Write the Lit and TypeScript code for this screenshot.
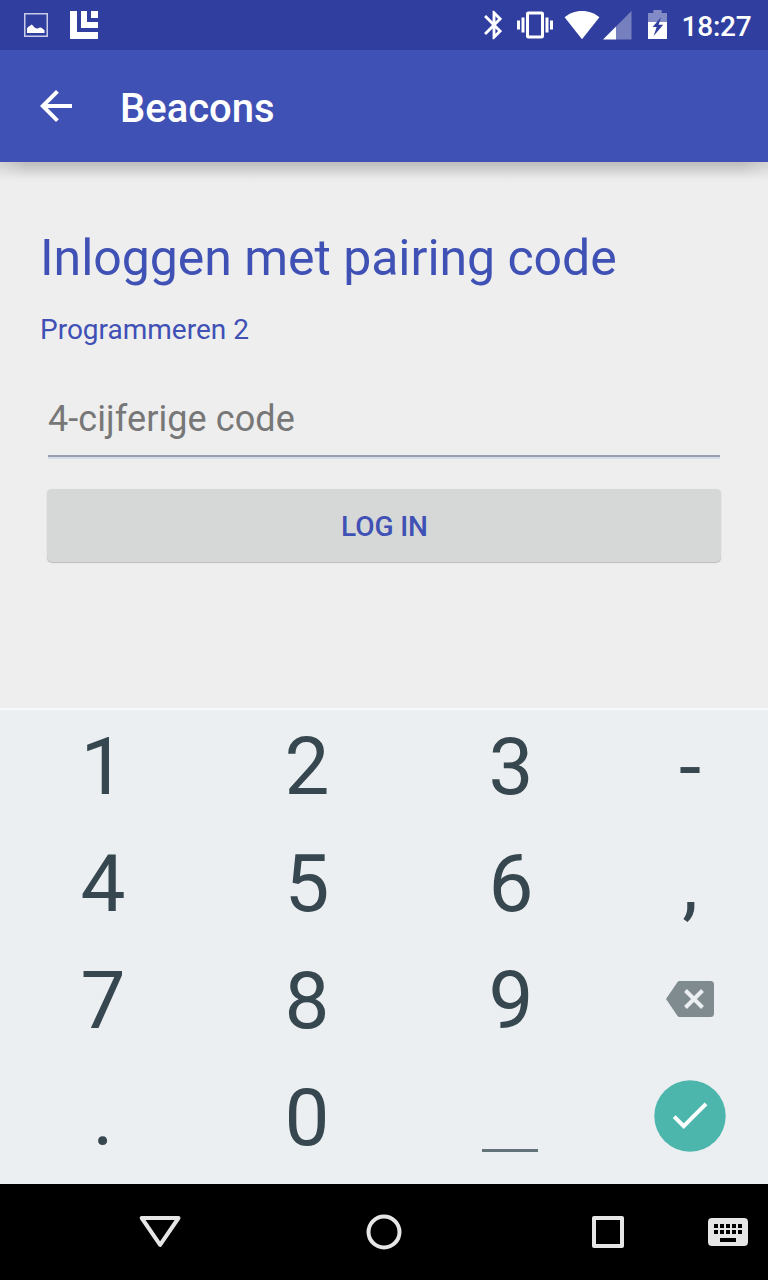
import { LitElement, html, css, svg } from "lit";
import { customElement } from "lit/decorators.js";

@customElement("status-bar")
class StatusBar extends LitElement {
  static styles = css`
    :host { display: flex; height: 50px; box-sizing: border-box; background: #303f9f; color: #fff;
      justify-content: space-between; padding: 0 16px 0 24px; }
    .group { display: flex; align-items: flex-start; }
    svg { display: block; height: 50px; flex: none; }
    .photo { width: 24px; margin-right: 22px; }
    .logo { width: 28px; }
    .bt { width: 18px; margin-right: 15px; }
    .vib { width: 36px; margin-right: 11px; }
    .wifi { width: 36px; margin-right: 3px; }
    .signal { width: 29px; margin-right: 16px; }
    .battery { width: 19px; margin-right: 14.5px; }
    .clock { font-size: 28px; font-weight: 500; line-height: 53px; width: 70.5px; white-space: nowrap; letter-spacing: -.2px; }
  `;
  render() {
    return html`
      <div class="group">
        <svg class="photo" viewBox="0 0 24 50">
          <rect x=".75" y="13.75" width="22.5" height="22.5" fill="none" stroke="#c8cce6" stroke-width="1.5"/>
          <path fill="#fff" d="M3 33V28.5C4.5 26 6 26.500 7.500 24.500C9.500 25.500 10.500 28.500 13 28.500C14.500 28.500 15 27 16.500 27.500C18.500 28 19 29.500 20.500 30V33Z"/>
        </svg>
        <svg class="logo" viewBox="0 0 28 50" fill="#fff">
          <path d="M0 11H7V32H28V39H0ZM11 11H17V22H28V28H11ZM21 11H28V18H21Z"/>
        </svg>
      </div>
      <div class="group">
        <svg class="bt" viewBox="0 0 18 50" fill="#fff">
          <path transform="translate(-7 8) scale(1.417)" d="M17.71 7.71L12 2h-1v7.59L6.41 5 5 6.41 10.59 12 5 17.59 6.41 19 11 14.41V22h1l5.71-5.71-4.3-4.29 4.3-4.29zM13 5.83l1.88 1.88L13 9.59V5.83zm1.88 10.46L13 18.17v-3.76l1.88 1.88z"/>
        </svg>
        <svg class="vib" viewBox="0 0 36 50" fill="#fff">
          <path transform="translate(0 7) scale(1.5)" d="M0 15h2V9H0v6zm3 2h2V7H3v10zm19-8v6h2V9h-2zm-3 8h2V7h-2v10zM16.500 3h-9C6.670 3 6 3.670 6 4.500v15c0 .83.67 1.500 1.500 1.500h9c.83 0 1.500-.67 1.500-1.500v-15c0-.83-.67-1.500-1.500-1.500zM16 19H8V5h8v14z"/>
        </svg>
        <svg class="wifi" viewBox="0 0 36 50" fill="#fff">
          <path d="M18 39.200L.6 17.300C5 13.300 11 11 18 11S31 13.300 35.400 17.300Z"/>
        </svg>
        <svg class="signal" viewBox="0 0 29 50" fill="#fff">
          <path opacity=".34" d="M13 26.500L28.500 11V39.500H13Z"/>
          <path d="M0 39.500L13 26.500V39.500Z"/>
        </svg>
        <svg class="battery" viewBox="0 0 19 50" fill="#fff">
          <path opacity=".4" d="M5.300 10H13.700V13H19V22H0V13H5.300Z"/>
          <path d="M0 22H19V39H0Z"/>
          <path fill="#303f9f" d="M13 17.300L4.600 27H8.700L5.600 36L15.200 24.800H10.600Z"/>
        </svg>
        <span class="clock">18:27</span>
      </div>`;
  }
}

@customElement("app-toolbar")
class AppToolbar extends LitElement {
  static styles = css`
    :host { display: flex; align-items: center; height: 112px; box-sizing: border-box; padding-left: 40px;
      background: #3f51b5; color: #fff; position: relative; }
    .back { display: block; width: 32px; height: 32px; margin-right: 48px; }
    .title { font-size: 40px; font-weight: 500; line-height: 48px; padding-top: 6px; }
    .shadow { position: absolute; left: 0; right: 0; top: 112px; height: 20px; overflow: hidden; }
    .shade { height: 20px; background: linear-gradient(#bdbdbd, #c6c6c6 20%, #dadada 55%, #e9e9e9 82%, #eeeeee);
      -webkit-mask-image: linear-gradient(90deg, rgba(0,0,0,.55), #000 26px, #000 742px, rgba(0,0,0,.55)); }
  `;
  render() {
    return html`
      <svg class="back" viewBox="4 4 16 16" fill="#fff">
        <path d="M20 11H7.830l5.590-5.590L12 4l-8 8 8 8 1.410-1.410L7.830 13H20v-2z"/>
      </svg>
      <span class="title">Beacons</span>
      <div class="shadow"><div class="shade"></div></div>`;
  }
}

@customElement("login-form")
class LoginForm extends LitElement {
  static styles = css`
    :host { display: block; height: 546px; box-sizing: border-box; padding: 66px 40px 0; background: #eeeeee; color: #3f51b5; }
    h1 { margin: 0; font-size: 50px; font-weight: 400; line-height: 60px; white-space: nowrap; letter-spacing: -.04px; }
    .course { font-size: 28px; line-height: 34px; margin-top: 25px; }
    .field { margin: 47px 8px 0; height: 61px; border-bottom: 2px solid #9a9fb0; box-shadow: 0 2px #d7dceb;
      font-size: 36px; line-height: 50px; color: #777; letter-spacing: .08px; }
    .button { margin: 32px 7px 0; height: 73px; border-radius: 5px; background: #d6d8d7;
      box-shadow: 0 1px 1px rgba(0,0,0,.2), 0 0 1px rgba(0,0,0,.1);
      font-size: 28px; font-weight: 500; line-height: 75px; text-align: center; letter-spacing: -.1px; text-indent: 1px; }
  `;
  render() {
    return html`
      <h1>Inloggen met pairing code</h1>
      <div class="course">Programmeren 2</div>
      <div class="field">4-cijferige code</div>
      <div class="button">LOG IN</div>`;
  }
}

const backspace = svg`<svg class="delete" viewBox="0 0 48 36">
  <path fill="#808b8f" d="M13.500 0H44.500Q48 0 48 3.500V32.500Q48 36 44.500 36H13.500Q12.200 36 11.400 34.800L0 18L11.400 1.200Q12.200 0 13.500 0Z"/>
  <path d="M19.500 9.500L36.500 26.500M36.500 9.500L19.500 26.500" stroke="#eceff1" stroke-width="4"/></svg>`;
const enter = svg`<svg class="enter" viewBox="0 0 72 72">
  <circle cx="36" cy="36" r="35.700" fill="#4db6ac"/>
  <path d="M20.200 36.700L29.700 46.200L52 23.900" fill="none" stroke="#fff" stroke-width="4"/></svg>`;

@customElement("number-pad")
class NumberPad extends LitElement {
  static styles = css`
    :host { display: grid; height: 476px; box-sizing: border-box; border-top: 2px solid #f5f9fb; padding-bottom: 6px;
      grid-template-columns: 205px 204px 204px 154px; grid-template-rows: repeat(4, 117px);
      background: #eceff1; color: #37474f; }
    .key { display: flex; justify-content: center; align-items: center; font-size: 80px; line-height: 94px;
      box-sizing: border-box; padding-bottom: 4px; }
    .key:nth-child(4n + 1) { padding-left: 1px; }
    .space { width: 56px; height: 3px; margin: 65px 2px 0 0; background: #64727a; }
    .delete { width: 48px; height: 36px; margin-top: -3px; }
    .enter { width: 72px; height: 72px; margin-top: -4px; }
  `;
  render() {
    const keys = ["1", "2", "3", "-", "4", "5", "6", ",", "7", "8", "9", backspace,
      ".", "0", html`<span class="space"></span>`, enter];
    return keys.map((k) => html`<div class="key">${k}</div>`);
  }
}

@customElement("nav-bar")
class NavBar extends LitElement {
  static styles = css`
    :host { display: flex; height: 96px; background: #000; align-items: center; box-sizing: border-box; padding-left: 138px; }
    svg { display: block; flex: none; height: 44px; }
    .back { width: 44px; margin-right: 182px; }
    .home { width: 40px; margin-right: 186px; }
    .recent { width: 36px; margin-right: 82px; }
    .ime { width: 40px; }
  `;
  render() {
    return html`
      <svg class="back" viewBox="0 0 44 44"><path d="M3.700 8H40.500L22.100 34.800Z" fill="none" stroke="#e6e6e6" stroke-width="4" stroke-linejoin="round"/></svg>
      <svg class="home" viewBox="0 0 40 44"><circle cx="20" cy="22" r="15.500" fill="none" stroke="#e6e6e6" stroke-width="4"/></svg>
      <svg class="recent" viewBox="0 0 36 44"><rect x="4" y="8" width="28" height="28" fill="none" stroke="#e6e6e6" stroke-width="4" stroke-linejoin="round"/></svg>
      <svg class="ime" viewBox="0 0 40 44">
        <rect y="8" width="40" height="28" rx="4" fill="#e6e6e6"/>
        ${[14, 20].map((y) => [6, 12, 18, 24, 30].map((x) => svg`<rect x=${x} y=${y} width="4" height="4"/>`))}
        <rect x="12" y="28" width="16" height="4"/>
      </svg>`;
  }
}

@customElement("app-root")
class AppRoot extends LitElement {
  static styles = css`
    :host { display: flex; flex-direction: column; width: 768px; height: 1280px; overflow: hidden;
      font-family: Roboto, "Liberation Sans", sans-serif; }
  `;
  render() {
    return html`<status-bar></status-bar><app-toolbar></app-toolbar><login-form></login-form>
      <number-pad></number-pad><nav-bar></nav-bar>`;
  }
}
